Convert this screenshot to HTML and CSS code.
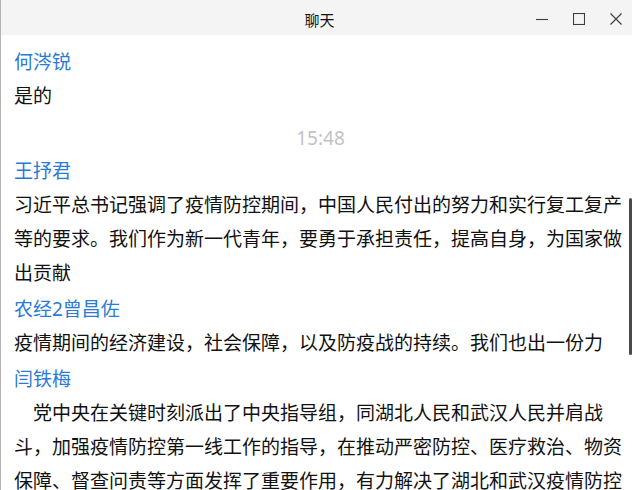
FILE: index.html
```html
<!DOCTYPE html>
<html lang="zh-CN">
<head>
  <meta charset="UTF-8">
  <meta name="viewport" content="width=device-width, initial-scale=1.0">
  <link rel="stylesheet" href="styles.css">
</head>
<body>
  <div class="window">
    <!-- Title Bar -->
    <header class="titlebar">
      <span></span>
      <span class="title">聊天</span>
      <div class="controls">
        <svg class="ctl" viewBox="0 0 12 12"><path d="M0 6.5H12" /></svg>
        <svg class="ctl" viewBox="0 0 12 12"><rect x="0.5" y="0.5" width="11" height="11" /></svg>
        <svg class="ctl" viewBox="0 0 12 12"><path d="M0.5 0.5L11.5 11.5M11.5 0.5L0.5 11.5" /></svg>
      </div>
    </header>

    <!-- Chat Messages -->
    <main class="chat">
      <div class="msg">
        <div class="name">何涔锐</div>
        <div class="text">是的</div>
      </div>

      <div class="time">15:48</div>

      <div class="msg">
        <div class="name">王抒君</div>
        <div class="text">习近平总书记强调了疫情防控期间，中国人民付出的努力和实行复工复产等的要求。我们作为新一代青年，要勇于承担责任，提高自身，为国家做出贡献</div>
      </div>

      <div class="msg">
        <div class="name">农经2曾昌佐</div>
        <div class="text">疫情期间的经济建设，社会保障，以及防疫战的持续。我们也出一份力</div>
      </div>

      <div class="msg">
        <div class="name">闫铁梅</div>
        <div class="text indent">党中央在关键时刻派出了中央指导组，同湖北人民和武汉人民并肩战斗，加强疫情防控第一线工作的指导，在推动严密防控、医疗救治、物资保障、督查问责等方面发挥了重要作用，有力解决了湖北和武汉疫情防控</div>
      </div>
    </main>

    <!-- Scrollbar thumb -->
    <div class="scroll-thumb"></div>
  </div>
</body>
</html>
```

FILE: styles.css
```css
/* General Styles */
body {
  margin: 0;
  padding: 0;
  font-family: "Noto Sans", "Noto Sans CJK SC", sans-serif;
  background-color: #FFFFFF;
  color: #111111;
}

.window {
  position: relative;
  height: 490px;
  overflow: hidden;
  border-left: 1px solid #B4B4B4;
  box-sizing: border-box;
}

/* Title Bar */
.titlebar {
  display: grid;
  grid-template-columns: 1fr auto 1fr;
  align-items: center;
  height: 35px;
  padding: 3px 0 0 6px;
  box-sizing: border-box;
  background-color: #F4F4F4;
}

.title {
  font-size: 15px;
  color: #111111;
}

.controls {
  display: flex;
  justify-content: flex-end;
  align-items: center;
  gap: 25px;
  padding-right: 10px;
}

.ctl {
  width: 12px;
  height: 12px;
  fill: none;
  stroke: #3C3C3C;
  stroke-width: 1.1;
}

/* Chat */
.chat {
  padding: 11px 5px 0 13px;
  font-size: 19px;
}

.msg {
  margin-bottom: 3px;
}

.name {
  line-height: 33px;
  color: #2B7BD6;
}

.text {
  line-height: 34px;
}

.text.indent {
  text-indent: 1em;
}

.time {
  padding-top: 5px;
  line-height: 34px;
  text-align: center;
  color: #C2C2C2;
}

/* Scrollbar */
.scroll-thumb {
  position: absolute;
  top: 198px;
  right: 0;
  width: 3px;
  height: 157px;
  border-radius: 2px;
  background-color: #4A4A4A;
}
```
